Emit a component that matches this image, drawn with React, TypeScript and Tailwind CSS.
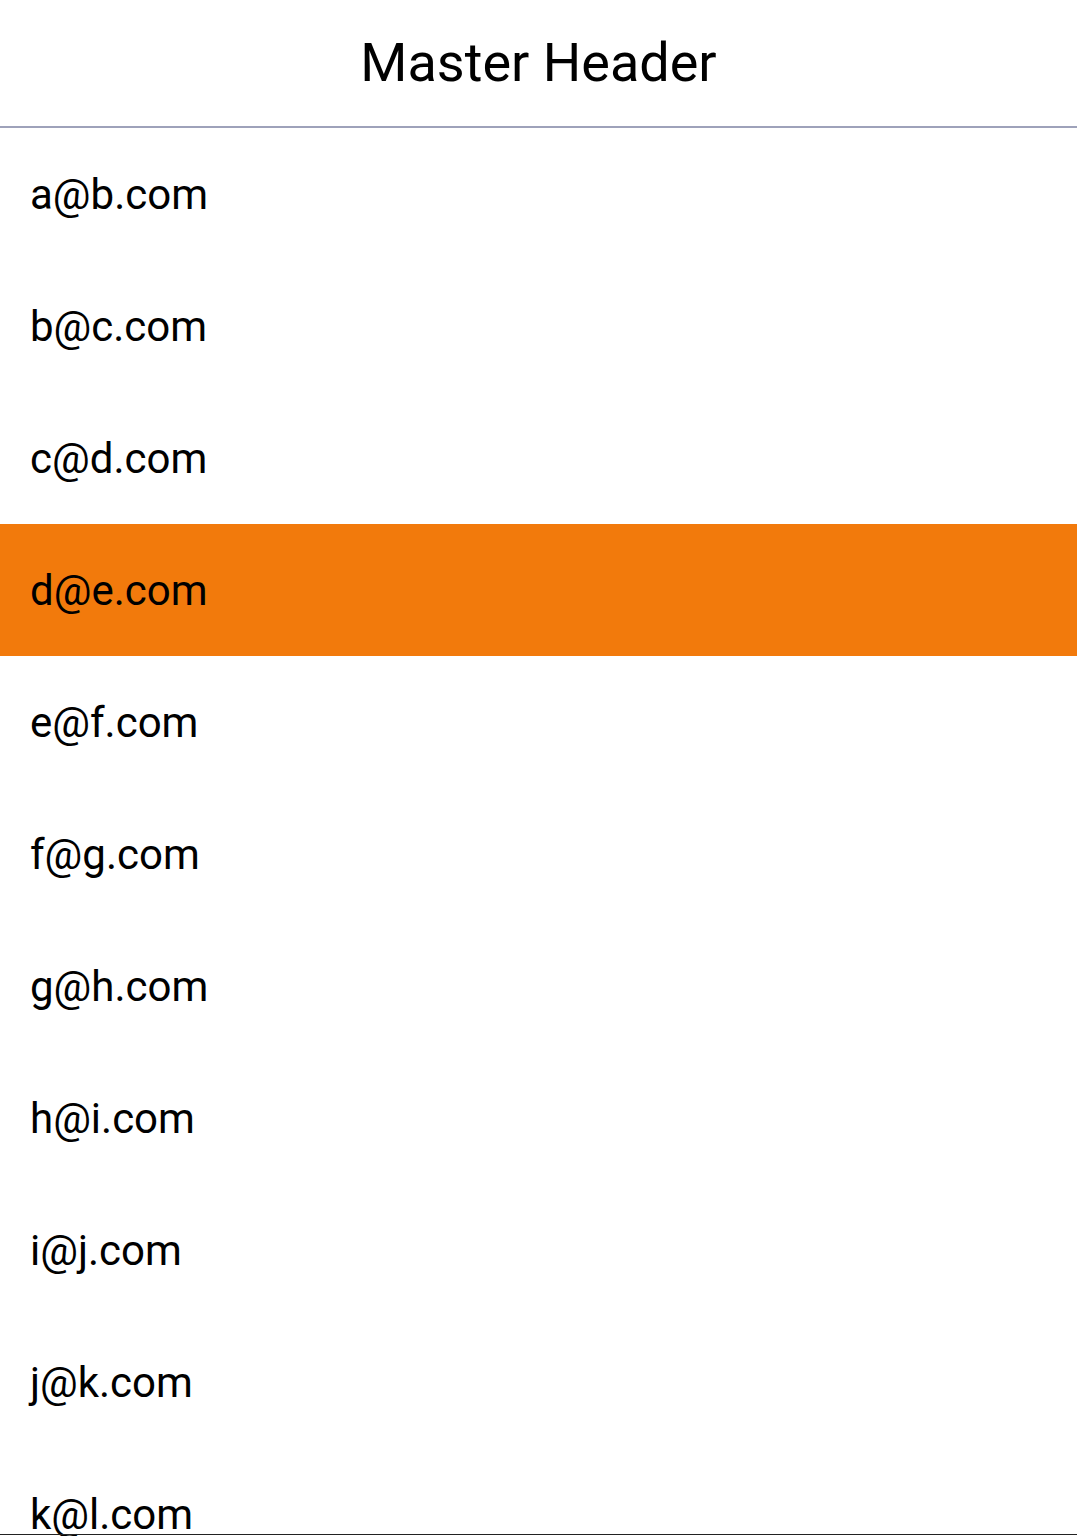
const emails = [
  "a@b.com",
  "b@c.com",
  "c@d.com",
  "d@e.com",
  "e@f.com",
  "f@g.com",
  "g@h.com",
  "h@i.com",
  "i@j.com",
  "j@k.com",
  "k@l.com",
];

const selected = "d@e.com";

export default function App() {
  return (
    <div className="relative h-[1536px] overflow-hidden bg-white font-['Roboto',sans-serif] text-black">
      <header className="flex h-[128px] items-center justify-center border-b-2 border-[#9ea2ba]">
        <h1 className="text-[54px] leading-none">Master Header</h1>
      </header>
      <ul>
        {emails.map((email) => (
          <li
            key={email}
            className={
              email === selected
                ? "flex h-[132px] items-center bg-[#f27a0c] px-[30px] text-[42px]"
                : "flex h-[132px] items-center px-[30px] text-[42px]"
            }
          >
            {email}
          </li>
        ))}
      </ul>
      <div className="absolute inset-x-0 bottom-[1px] h-px bg-[#222]" />
    </div>
  );
}
